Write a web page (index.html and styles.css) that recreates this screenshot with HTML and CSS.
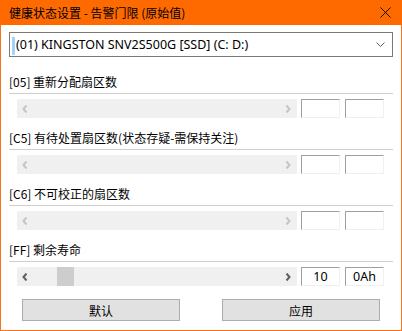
FILE: index.html
```html
<!DOCTYPE html>
<html>
<head>
<meta charset="utf-8">
<link rel="stylesheet" href="styles.css">
</head>
<body>
	<div id="janela">
		<div class="titulo">
			<span class="titulo_texto">健康状态设置 - 告警门限 (原始值)</span>
			<svg class="fechar" width="11" height="11" viewBox="0 0 11 11"><path d="M0.5 0.5L10.5 10.5M10.5 0.5L0.5 10.5" stroke="#000" stroke-width="1"/></svg>
		</div>
		<div class="conteudo">
			<div class="combo">
				<span class="selecao"></span>
				<span class="combo_texto">(01) KINGSTON SNV2S500G [SSD] (C: D:)</span>
				<svg class="seta" width="9" height="5" viewBox="0 0 9 5"><path d="M0.5 0.5L4.5 4.5L8.5 0.5" stroke="#606060" fill="none"/></svg>
			</div>

			<div class="secao">
				<div class="rotulo">[05] 重新分配扇区数</div>
				<div class="linha"></div>
				<div class="controles">
					<div class="barra">
						<svg class="ponta" width="6" height="8" viewBox="0 0 6 8"><path d="M4.5 0.5L1.5 4L4.5 7.5" stroke="#c5c5c5" stroke-width="2" fill="none"/></svg>
						<svg class="ponta" width="6" height="8" viewBox="0 0 6 8"><path d="M1.5 0.5L4.5 4L1.5 7.5" stroke="#c5c5c5" stroke-width="2" fill="none"/></svg>
					</div>
					<div class="caixa"></div>
					<div class="caixa"></div>
				</div>
			</div>

			<div class="secao">
				<div class="rotulo">[C5] 有待处置扇区数(状态存疑-需保持关注)</div>
				<div class="linha"></div>
				<div class="controles">
					<div class="barra">
						<svg class="ponta" width="6" height="8" viewBox="0 0 6 8"><path d="M4.5 0.5L1.5 4L4.5 7.5" stroke="#c5c5c5" stroke-width="2" fill="none"/></svg>
						<svg class="ponta" width="6" height="8" viewBox="0 0 6 8"><path d="M1.5 0.5L4.5 4L1.5 7.5" stroke="#c5c5c5" stroke-width="2" fill="none"/></svg>
					</div>
					<div class="caixa"></div>
					<div class="caixa"></div>
				</div>
			</div>

			<div class="secao">
				<div class="rotulo">[C6] 不可校正的扇区数</div>
				<div class="linha"></div>
				<div class="controles">
					<div class="barra">
						<svg class="ponta" width="6" height="8" viewBox="0 0 6 8"><path d="M4.5 0.5L1.5 4L4.5 7.5" stroke="#c5c5c5" stroke-width="2" fill="none"/></svg>
						<svg class="ponta" width="6" height="8" viewBox="0 0 6 8"><path d="M1.5 0.5L4.5 4L1.5 7.5" stroke="#c5c5c5" stroke-width="2" fill="none"/></svg>
					</div>
					<div class="caixa"></div>
					<div class="caixa"></div>
				</div>
			</div>

			<div class="secao">
				<div class="rotulo">[FF] 剩余寿命</div>
				<div class="linha"></div>
				<div class="controles">
					<div class="barra ativa">
						<svg class="ponta" width="6" height="8" viewBox="0 0 6 8"><path d="M4.5 0.5L1.5 4L4.5 7.5" stroke="#606060" stroke-width="2" fill="none"/></svg>
						<div class="trilho"><div class="polegar"></div></div>
						<svg class="ponta" width="6" height="8" viewBox="0 0 6 8"><path d="M1.5 0.5L4.5 4L1.5 7.5" stroke="#606060" stroke-width="2" fill="none"/></svg>
					</div>
					<div class="caixa">10</div>
					<div class="caixa">0Ah</div>
				</div>
			</div>

			<div class="botoes">
				<button class="botao">默认</button>
				<button class="botao">应用</button>
			</div>
		</div>
	</div>
</body>
</html>
```

FILE: styles.css
```css
body{
	margin: 0;
	font-family: "Noto Sans CJK SC", sans-serif;
	font-size: 12px;
	color: #000;
}

#janela{
	width: 400px;
	height: 330px;
	border: solid #f7741c 1px;
	border-top: none;
	background-color: #fff;
}

.titulo{
	height: 25px;
	margin: 0 -1px;
	padding: 0 11px 0 9px;
	background-color: #ff6a00;
	display: flex;
	align-items: center;
	justify-content: space-between;
}

.titulo_texto{
	font-size: 12px;
	line-height: 16px;
}

.conteudo{
	padding: 7px 8px 0 8px;
}

.combo{
	height: 23px;
	border: solid #7a7a7a 1px;
	display: flex;
	align-items: center;
	padding: 0 4px 0 2px;
}

.selecao{
	width: 3px;
	height: 18px;
	margin-top: 2px;
	background-color: #a3d4f5;
}

.combo_texto{
	flex: 1;
	margin-left: 1px;
	font-family: "Noto Sans", sans-serif;
	font-size: 12.5px;
	line-height: 16px;
}

.seta{
	margin-right: 3px;
}

.secao{
	margin-top: 17px;
}

.secao + .secao{
	margin-top: 12px;
}

.rotulo{
	height: 16px;
	line-height: 16px;
}

.linha{
	height: 1px;
	margin-top: 3px;
	background-color: #d0d0d0;
}

.controles{
	display: flex;
	margin-top: 5px;
	padding-left: 8px;
	height: 19px;
}

.barra{
	width: 280px;
	background-color: #f0f0f0;
	display: flex;
	align-items: center;
	justify-content: space-between;
	padding: 0 6px 0 5px;
	box-sizing: border-box;
}

.trilho{
	flex: 1;
	height: 19px;
	margin: 0 3px;
}

.polegar{
	width: 17px;
	height: 19px;
	margin-left: 26px;
	background-color: #cdcdcd;
}

.caixa{
	width: 39px;
	margin-left: 4px;
	box-sizing: border-box;
	border-top: solid #a0a0a0 1px;
	border-left: solid #a0a0a0 1px;
	border-right: solid #f0f0f0 1px;
	border-bottom: solid #f0f0f0 1px;
	text-align: center;
	font-family: "Noto Sans", sans-serif;
	font-size: 12.5px;
	line-height: 17px;
}

.caixa + .caixa{
	margin-left: 5px;
}

.botoes{
	display: flex;
	justify-content: center;
	gap: 42px;
	margin-top: 13px;
}

.botao{
	width: 158px;
	height: 22px;
	font-family: "Noto Sans CJK SC", sans-serif;
	font-size: 12px;
	color: #000;
	background-color: #e1e1e1;
	border: solid #adadad 1px;
	padding: 0;
}
```
